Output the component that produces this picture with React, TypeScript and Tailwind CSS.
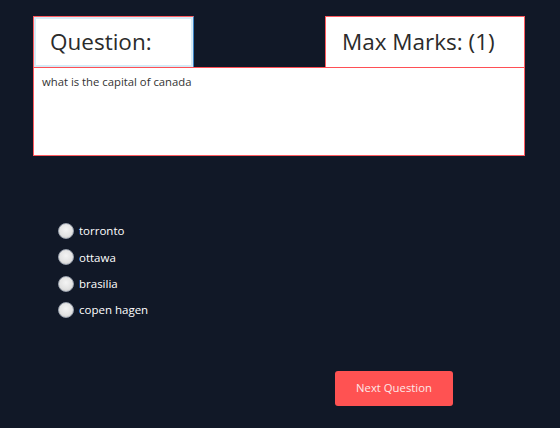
import React from 'react';

const options = ['torronto', 'ottawa', 'brasilia', 'copen hagen'];

export default function App() {
  return (
    <div className="w-[560px] h-[428px] bg-[#111827] font-['Open_Sans',sans-serif] overflow-hidden">
      <div className="pl-[33px] pr-[35px] pt-4">
        <div className="flex justify-between items-end">
          <div className="w-[161px] h-[52px] bg-white border border-[#ff5a5f] border-r-[#3b82c4] shadow-[inset_0_0_0_2px_#d6eaf5] flex items-center pl-4">
            <span className="text-[22.5px] text-[#2b2b2b] leading-none">Question:</span>
          </div>
          <div className="w-[200px] h-[52px] bg-white border border-[#ff5a5f] flex items-center pl-4">
            <span className="text-[22.5px] text-[#2b2b2b] leading-none">Max Marks: (1)</span>
          </div>
        </div>
        <div className="relative z-10 -mt-px h-[89px] bg-white border border-[#ff5a5f] border-t-[#ff4f55] px-2 pt-[5px]">
          <p className="text-[11.3px] text-[#333] leading-[18px]">what is the capital of canada</p>
        </div>
      </div>

      <div className="ml-[58px] mt-[67px] flex flex-col gap-[10.4px]">
        {options.map((o) => (
          <label key={o} className="flex items-center gap-[5px] h-4">
            <span className="w-4 h-4 rounded-full border border-[#9ca3af] bg-[radial-gradient(circle_at_50%_40%,#f4f4f4_0%,#e2e2e2_60%,#bdbdbd_100%)]" />
            <span className="text-[11.5px] text-white leading-none">{o}</span>
          </label>
        ))}
      </div>

      <div className="ml-[335px] mt-[53px]">
        <button className="w-[118px] h-[35px] bg-[#ff5252] rounded-[3px] text-[11.3px] text-[#fde8e8]">
          Next Question
        </button>
      </div>
    </div>
  );
}
